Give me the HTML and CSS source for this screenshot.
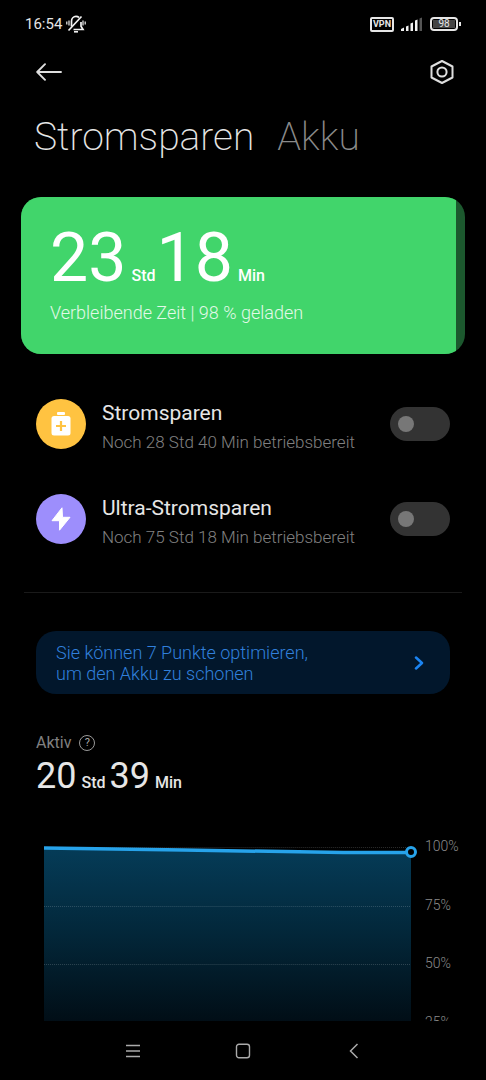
FILE: index.html
```
<!DOCTYPE html>
<html lang="de">
<head>
    <meta charset="UTF-8">
    <meta name="viewport" content="width=device-width, initial-scale=1.0">
    <title>Stromsparen</title>
    <link rel="stylesheet" href="styles.css">
</head>
<body>
    <div class="status-bar">
        <div class="status-left">
            <span>16:54</span>
            <svg width="20" height="18" viewBox="0 0 20 18" fill="none" stroke="#f2f2f2">
                <path d="M5.5 11.5V6.2C5.5 3.4 7.6 1.4 10 1.4c1.2 0 2.2.4 3 1.1M15 7v4.2l2 3.3H7.5" stroke-width="1.7"/>
                <path d="M2.5 15.5L15.5 1.5" stroke-width="1.7"/>
                <path d="M8 16.8h4" stroke-width="1.6"/>
                <path d="M.8 6.5v3M3 5.5v5M17 5.5v5M19.2 6.5v3" stroke-width="1.2"/>
            </svg>
        </div>
        <div class="status-right">
            <span class="vpn">VPN</span>
            <svg width="22" height="14" viewBox="0 0 22 14" fill="#f2f2f2">
                <path d="M0 14v-2l3-1.5V14zM5 14V9.500l2.500-1V14zM9.500 14V6.500l2.500-1V14zM14 14V3.500l2.500-1V14z"/>
                <path d="M18.500 14V1.500L21 .5V14z" fill="#555"/>
            </svg>
            <span class="battery"><span class="battery-level">98</span></span>
        </div>
    </div>

    <header class="top-bar">
        <button class="icon-btn" aria-label="Zurück">
            <svg width="26" height="18" viewBox="0 0 26 18" fill="none" stroke="#dedede" stroke-width="1.9" stroke-linecap="round" stroke-linejoin="round">
                <path d="M25 9H1.500M9 1.200L1.200 9L9 16.800"/>
            </svg>
        </button>
        <button class="icon-btn" aria-label="Einstellungen">
            <svg width="24" height="24" viewBox="0 0 24 24" fill="none" stroke="#dedede" stroke-width="2" stroke-linejoin="round">
                <path d="M12 1L22.500 6.500V17.500L12 23L1.500 17.500V6.500Z"/>
                <circle cx="12" cy="12" r="4.600"/>
            </svg>
        </button>
    </header>

    <nav class="tabs">
        <button class="tab active">Stromsparen</button>
        <button class="tab">Akku</button>
    </nav>

    <main class="content">
        <section class="battery-card">
            <div class="battery-fill" style="width: 98%"></div>
            <div class="battery-info">
                <div class="time time-large">
                    <span class="number">23</span><span class="unit">Std</span><span class="number">18</span><span class="unit">Min</span>
                </div>
                <p class="remaining">Verbleibende Zeit | 98 % geladen</p>
            </div>
        </section>

        <section class="modes">
            <div class="mode">
                <span class="mode-icon yellow">
                    <svg width="20" height="24" viewBox="0 0 20 24">
                        <rect x="6" y="0" width="8" height="3" rx="1" fill="#fff"/>
                        <rect x="0.500" y="4" width="19" height="19.500" rx="2.500" fill="#fff"/>
                        <path d="M10 9v10M5 14h10" stroke="#ffc341" stroke-width="2.200"/>
                    </svg>
                </span>
                <label class="mode-text" for="saver">
                    <span class="mode-title">Stromsparen</span>
                    <span class="mode-desc">Noch 28 Std 40 Min betriebsbereit</span>
                </label>
                <input class="switch" type="checkbox" id="saver">
            </div>
            <div class="mode">
                <span class="mode-icon purple">
                    <svg width="20" height="24" viewBox="0 0 20 24" fill="#fff" stroke="#fff" stroke-linejoin="round">
                        <path d="M11 .8L1 13.700H8.500V23.200L19 10.300H11.500Z"/>
                    </svg>
                </span>
                <label class="mode-text" for="ultra">
                    <span class="mode-title">Ultra-Stromsparen</span>
                    <span class="mode-desc">Noch 75 Std 18 Min betriebsbereit</span>
                </label>
                <input class="switch" type="checkbox" id="ultra">
            </div>
        </section>

        <hr class="divider">

        <a class="tip" href="#">
            <span>Sie können 7 Punkte optimieren,<br>um den Akku zu schonen</span>
            <svg width="10" height="14" viewBox="0 0 10 14" fill="none" stroke="#1b84f2" stroke-width="2.500" stroke-linecap="round" stroke-linejoin="round">
                <path d="M2 1.500L8 7L2 12.500"/>
            </svg>
        </a>

        <section class="usage">
            <div class="usage-label">
                <span>Aktiv</span>
                <button class="help" aria-label="Hilfe">?</button>
            </div>
            <div class="time time-small">
                <span class="number">20</span><span class="unit">Std</span><span class="number">39</span><span class="unit">Min</span>
            </div>
        </section>

        <section class="chart">
            <div class="plot">
                <svg class="plot-area" viewBox="0 0 368 236" preserveAspectRatio="none">
                    <defs>
                        <linearGradient id="fade" x1="0" y1="0" x2="0" y2="1">
                            <stop offset="0" stop-color="#053c58"/>
                            <stop offset="0.350" stop-color="#03283b"/>
                            <stop offset="0.750" stop-color="#010d15"/>
                            <stop offset="1" stop-color="#000"/>
                        </linearGradient>
                    </defs>
                    <path d="M0 0L300 5H368V236H0Z" fill="url(#fade)"/>
                    <path d="M0 .5H368M0 59.500H368M0 117.500H368M0 176.500H368" stroke="#fff" stroke-opacity="0.180" stroke-dasharray="1 1"/>
                    <path d="M0 1L140 3L300 5.500H368" fill="none" stroke="#27a3ea" stroke-width="3.500"/>
                </svg>
                <span class="plot-dot"></span>
            </div>
            <div class="axis">
                <span>100%</span>
                <span>75%</span>
                <span>50%</span>
                <span>25%</span>
            </div>
        </section>
    </main>

    <nav class="nav-bar">
        <button class="icon-btn" aria-label="Menü">
            <svg width="16" height="16" viewBox="0 0 16 16" stroke="#aaa" stroke-width="1.500">
                <path d="M1 2.500H15M1 8H15M1 13.500H15"/>
            </svg>
        </button>
        <button class="icon-btn" aria-label="Startseite">
            <svg width="16" height="16" viewBox="0 0 16 16" fill="none" stroke="#aaa" stroke-width="1.400">
                <rect x="1.500" y="1.200" width="13" height="13.600" rx="2.500"/>
            </svg>
        </button>
        <button class="icon-btn" aria-label="Zurück">
            <svg width="16" height="16" viewBox="0 0 16 16" fill="none" stroke="#aaa" stroke-width="1.500">
                <path d="M12.500 1L5.500 8L12.500 15"/>
            </svg>
        </button>
    </nav>
</body>
</html>
```
FILE: styles.css
```
* {
    box-sizing: border-box;
}

body {
    display: flex;
    flex-direction: column;
    height: 100vh;
    margin: 0;
    background-color: #000;
    color: #e6e6e6;
    font-family: Roboto, sans-serif;
    overflow: hidden;
}

button {
    padding: 0;
    border: none;
    background: none;
    color: inherit;
    font-family: inherit;
    cursor: pointer;
}

/* Status bar */
.status-bar {
    display: flex;
    justify-content: space-between;
    align-items: center;
    flex: none;
    height: 48px;
    padding: 0 28px 0 25px;
    font-size: 15px;
}

.status-left {
    display: flex;
    align-items: center;
    gap: 4px;
}

.status-right {
    display: flex;
    align-items: center;
    gap: 7px;
}

.vpn {
    padding: 0 1px;
    border: 2px solid #e6e6e6;
    border-radius: 2px;
    font-size: 9px;
    font-weight: 700;
    line-height: 11px;
}

.battery {
    position: relative;
    width: 28px;
    height: 14px;
    padding: 1px;
    border: 2px solid #e6e6e6;
    border-radius: 4px;
}

.battery::after {
    content: "";
    position: absolute;
    top: 3px;
    right: -5px;
    width: 2px;
    height: 4px;
    background-color: #e6e6e6;
}

.battery-level {
    display: block;
    background-color: #444;
    font-size: 10px;
    line-height: 8px;
    text-align: center;
}

/* Header */
.top-bar {
    display: flex;
    justify-content: space-between;
    align-items: center;
    flex: none;
    height: 48px;
    padding: 0 32px 0 36px;
}

.icon-btn {
    display: flex;
    align-items: center;
    justify-content: center;
}

.tabs {
    display: flex;
    flex: none;
    gap: 23px;
    height: 101px;
    padding: 17px 34px 0;
}

.tab {
    align-self: flex-start;
    color: #8a8a8a;
    font-size: 39px;
    font-weight: 200;
    line-height: 48px;
}

.tab.active {
    color: #e6e6e6;
}

.content {
    flex: 1;
    min-height: 0;
    overflow: hidden;
}

/* Remaining time card */
.battery-card {
    position: relative;
    margin: 0 21px;
    border-radius: 20px;
    background-color: #1c582e;
    overflow: hidden;
}

.battery-fill {
    position: absolute;
    top: 0;
    bottom: 0;
    left: 0;
    background-color: #41d56b;
}

.battery-info {
    position: relative;
    padding: 21px 29px 29px;
    color: #fff;
}

.time {
    display: flex;
    align-items: baseline;
}

.time .unit {
    font-weight: 500;
}

.time-large {
    margin-bottom: 3px;
}

.time-large .number {
    font-size: 68px;
    line-height: 80px;
}

.time-large .unit {
    margin: 0 1px 0 5px;
    font-size: 16px;
}

.time-small .number {
    font-size: 36px;
    line-height: 44px;
}

.time-small .unit {
    margin: 0 4px 0 5px;
    font-size: 16px;
}

.remaining {
    margin: 0;
    color: #e2f9e8;
    font-size: 18px;
    font-weight: 300;
    line-height: 24px;
}

/* Power modes */
.modes {
    display: flex;
    flex-direction: column;
    gap: 35px;
    padding: 40px 36px 43px;
}

.mode {
    display: flex;
    align-items: center;
    gap: 16px;
}

.mode-icon {
    display: flex;
    align-items: center;
    justify-content: center;
    width: 50px;
    height: 50px;
    border-radius: 50%;
}

.yellow {
    background-color: #ffc341;
}

.purple {
    background-color: #9d8efc;
}

.mode-text {
    display: flex;
    flex: 1;
    flex-direction: column;
    gap: 4px;
    padding-top: 6px;
}

.mode-title {
    font-size: 21px;
    line-height: 26px;
}

.mode-desc {
    color: #808080;
    font-size: 17px;
    font-weight: 300;
    line-height: 24px;
}

.switch {
    appearance: none;
    display: flex;
    align-items: center;
    width: 60px;
    height: 34px;
    margin: 0;
    padding: 0 8px;
    border-radius: 17px;
    background-color: #333;
    cursor: pointer;
}

.switch::before {
    content: "";
    width: 16px;
    height: 16px;
    border-radius: 50%;
    background-color: #777;
}

.switch:checked {
    justify-content: flex-end;
    background-color: #1b84f2;
}

.divider {
    height: 1px;
    margin: 0 24px;
    border: none;
    background-color: #1a1a1a;
}

/* Optimization hint */
.tip {
    display: flex;
    justify-content: space-between;
    align-items: center;
    margin: 38px 36px 0;
    padding: 11px 26px 10px 20px;
    border-radius: 20px;
    background-color: #02172c;
    color: #3180dc;
    font-size: 18px;
    font-weight: 300;
    line-height: 21px;
    text-decoration: none;
}

/* Usage */
.usage {
    padding: 38px 36px 0;
}

.usage-label {
    display: flex;
    align-items: center;
    gap: 8px;
    color: #808080;
    font-size: 16px;
    line-height: 22px;
}

.help {
    width: 16px;
    height: 16px;
    border: 1px solid #999;
    border-radius: 50%;
    color: #aaa;
    font-size: 11px;
    line-height: 14px;
}

.chart {
    display: flex;
    align-items: flex-start;
    gap: 14px;
    padding: 49px 24px 0 44px;
}

.plot {
    position: relative;
    flex: 1;
    height: 236px;
}

.plot-area {
    display: block;
    width: 100%;
    height: 100%;
    overflow: visible;
}

.plot-dot {
    position: absolute;
    top: -1px;
    right: -6px;
    width: 12px;
    height: 12px;
    border: 3px solid #27a3ea;
    border-radius: 50%;
    background-color: #000;
}

.axis {
    display: flex;
    flex-direction: column;
    justify-content: space-between;
    width: 37px;
    height: 194px;
    margin-top: -10px;
    color: #8a8a8a;
    font-size: 14px;
    font-weight: 300;
    line-height: 18px;
}

/* System navigation */
.nav-bar {
    display: flex;
    justify-content: space-between;
    align-items: center;
    flex: none;
    height: 59px;
    padding: 0 125px;
}
```
